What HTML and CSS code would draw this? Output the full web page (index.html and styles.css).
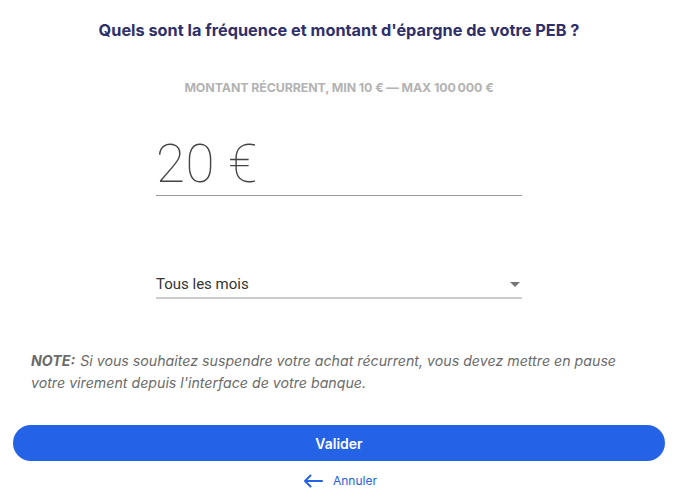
FILE: index.html
```html
<!DOCTYPE html>
<html lang="fr">
<head>
<meta charset="utf-8">
<link rel="stylesheet" href="styles.css">
</head>
<body>
<main class="page">
  <h1 class="title">Quels sont la fréquence et montant d'épargne de votre PEB ?</h1>
  <p class="label">MONTANT RÉCURRENT, MIN 10 € — MAX 100&#8201;000 €</p>
  <div class="field amount">
    <span class="amount-value">20 €</span>
  </div>
  <div class="field select">
    <span class="select-value">Tous les mois</span>
    <span class="caret"></span>
  </div>
  <p class="note"><strong>NOTE:</strong> Si vous souhaitez suspendre votre achat récurrent, vous devez mettre en pause votre virement depuis l'interface de votre banque.</p>
  <button class="btn">Valider</button>
  <a class="cancel" href="#">
    <svg class="arrow" width="20" height="14" viewBox="0 0 20 14"><path d="M19 7H2M7.5 1.5L2 7l5.5 5.5" fill="none" stroke="currentColor" stroke-width="2" stroke-linecap="round" stroke-linejoin="round"/></svg>
    <span>Annuler</span>
  </a>
</main>
</body>
</html>
```
FILE: styles.css
```css
* { box-sizing: border-box; }
html, body { margin: 0; padding: 0; background: #fff; }
body { font-family: Inter, "Noto Sans", sans-serif; }
.page {
  width: 690px;
  height: 500px;
  padding: 0 25px 0 13px;
  display: flex;
  flex-direction: column;
  align-items: center;
}
.title {
  margin: 20px 0 0;
  font-size: 16.3px;
  line-height: 20px;
  font-weight: 700;
  color: #2e2f6b;
  text-align: center;
}
.label {
  margin: 41px 0 0;
  font-size: 12.4px;
  line-height: 14px;
  font-weight: 700;
  color: #b3b3b3;
  text-align: center;
  letter-spacing: -0.1px;
}
.field {
  width: 366px;
  display: flex;
  align-items: center;
}
.amount {
  margin-top: 38px;
  height: 63px;
  border-bottom: 1px solid #999;
}
.amount-value {
  font-family: Roboto, sans-serif;
  font-size: 53px;
  font-weight: 100;
  line-height: 60px;
  color: #444;
  letter-spacing: 0.5px;
}
.select {
  margin-top: 75px;
  height: 28px;
  border-bottom: 2px solid #ccc;
  justify-content: space-between;
}
.select-value {
  font-family: Roboto, sans-serif;
  font-size: 15px;
  color: #333;
}
.caret {
  width: 0;
  height: 0;
  margin-right: 2px;
  border-left: 5px solid transparent;
  border-right: 5px solid transparent;
  border-top: 5px solid #757575;
}
.note {
  align-self: stretch;
  margin: 51px 0 0 18px;
  padding-right: 20px;
  font-size: 14.2px;
  line-height: 22px;
  font-style: italic;
  color: #6b6b6b;
}
.note strong { color: #6b6b6b; font-weight: 700; margin-right: 1px; }
.btn {
  align-self: stretch;
  margin-top: 31px;
  height: 36px;
  border: 0;
  border-radius: 18px;
  background: #2563e6;
  color: #fff;
  font-family: Inter, sans-serif;
  font-size: 14px;
  font-weight: 600;
}
.cancel {
  margin-top: 12px;
  display: flex;
  align-items: center;
  gap: 10px;
  color: #2563e6;
  text-decoration: none;
  font-size: 12px;
  margin-right: -2px;
}
.arrow { display: block; }
```
